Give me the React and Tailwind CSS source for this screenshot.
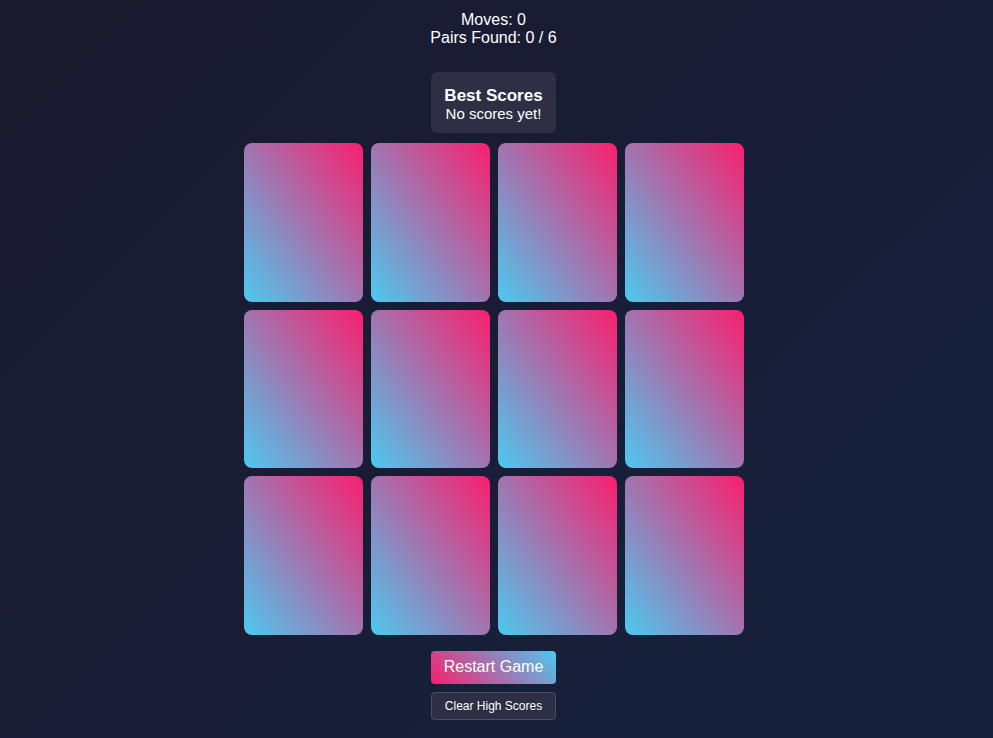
import React from 'react';

const CARDS = Array.from({ length: 12 }, (_, i) => i);

const App = () => {
  return (
    <div
      className="min-h-screen w-full bg-[linear-gradient(135deg,#1a1a2e,#16213e)] text-white flex flex-col items-center pt-[11px] pr-[6px]"
      style={{ fontFamily: '"Liberation Sans", Arial, sans-serif' }}
    >
      {/* Stats */}
      <div className="text-center text-[16px] leading-[18px]">
        <div>Moves: 0</div>
        <div>Pairs Found: 0 / 6</div>
      </div>

      {/* Best scores */}
      <div className="mt-[25px] w-[125px] h-[61px] rounded-md bg-[#2e2f45] flex flex-col items-center justify-center pt-[3px]">
        <div className="font-bold text-[17px] leading-[19px]">Best Scores</div>
        <div className="text-[15px] leading-[18px]">No scores yet!</div>
      </div>

      {/* Board */}
      <div className="mt-[10px] grid grid-cols-4 gap-[8px] w-[500px]">
        {CARDS.map((i) => (
          <div
            key={i}
            className="aspect-[3/4] rounded-lg bg-[linear-gradient(to_top_right,#4cc9f0,#f91f6e)]"
          />
        ))}
      </div>

      {/* Buttons */}
      <button className="mt-[16px] w-[125px] h-[33px] rounded bg-[linear-gradient(45deg,#f91f6e,#4cc9f0)] text-[16px] text-white">
        Restart Game
      </button>
      <button className="mt-[8px] w-[125px] h-[28px] rounded bg-[#2e2f45] border border-[#4b4e66] text-[12px] text-white">
        Clear High Scores
      </button>
    </div>
  );
};

export default App;
